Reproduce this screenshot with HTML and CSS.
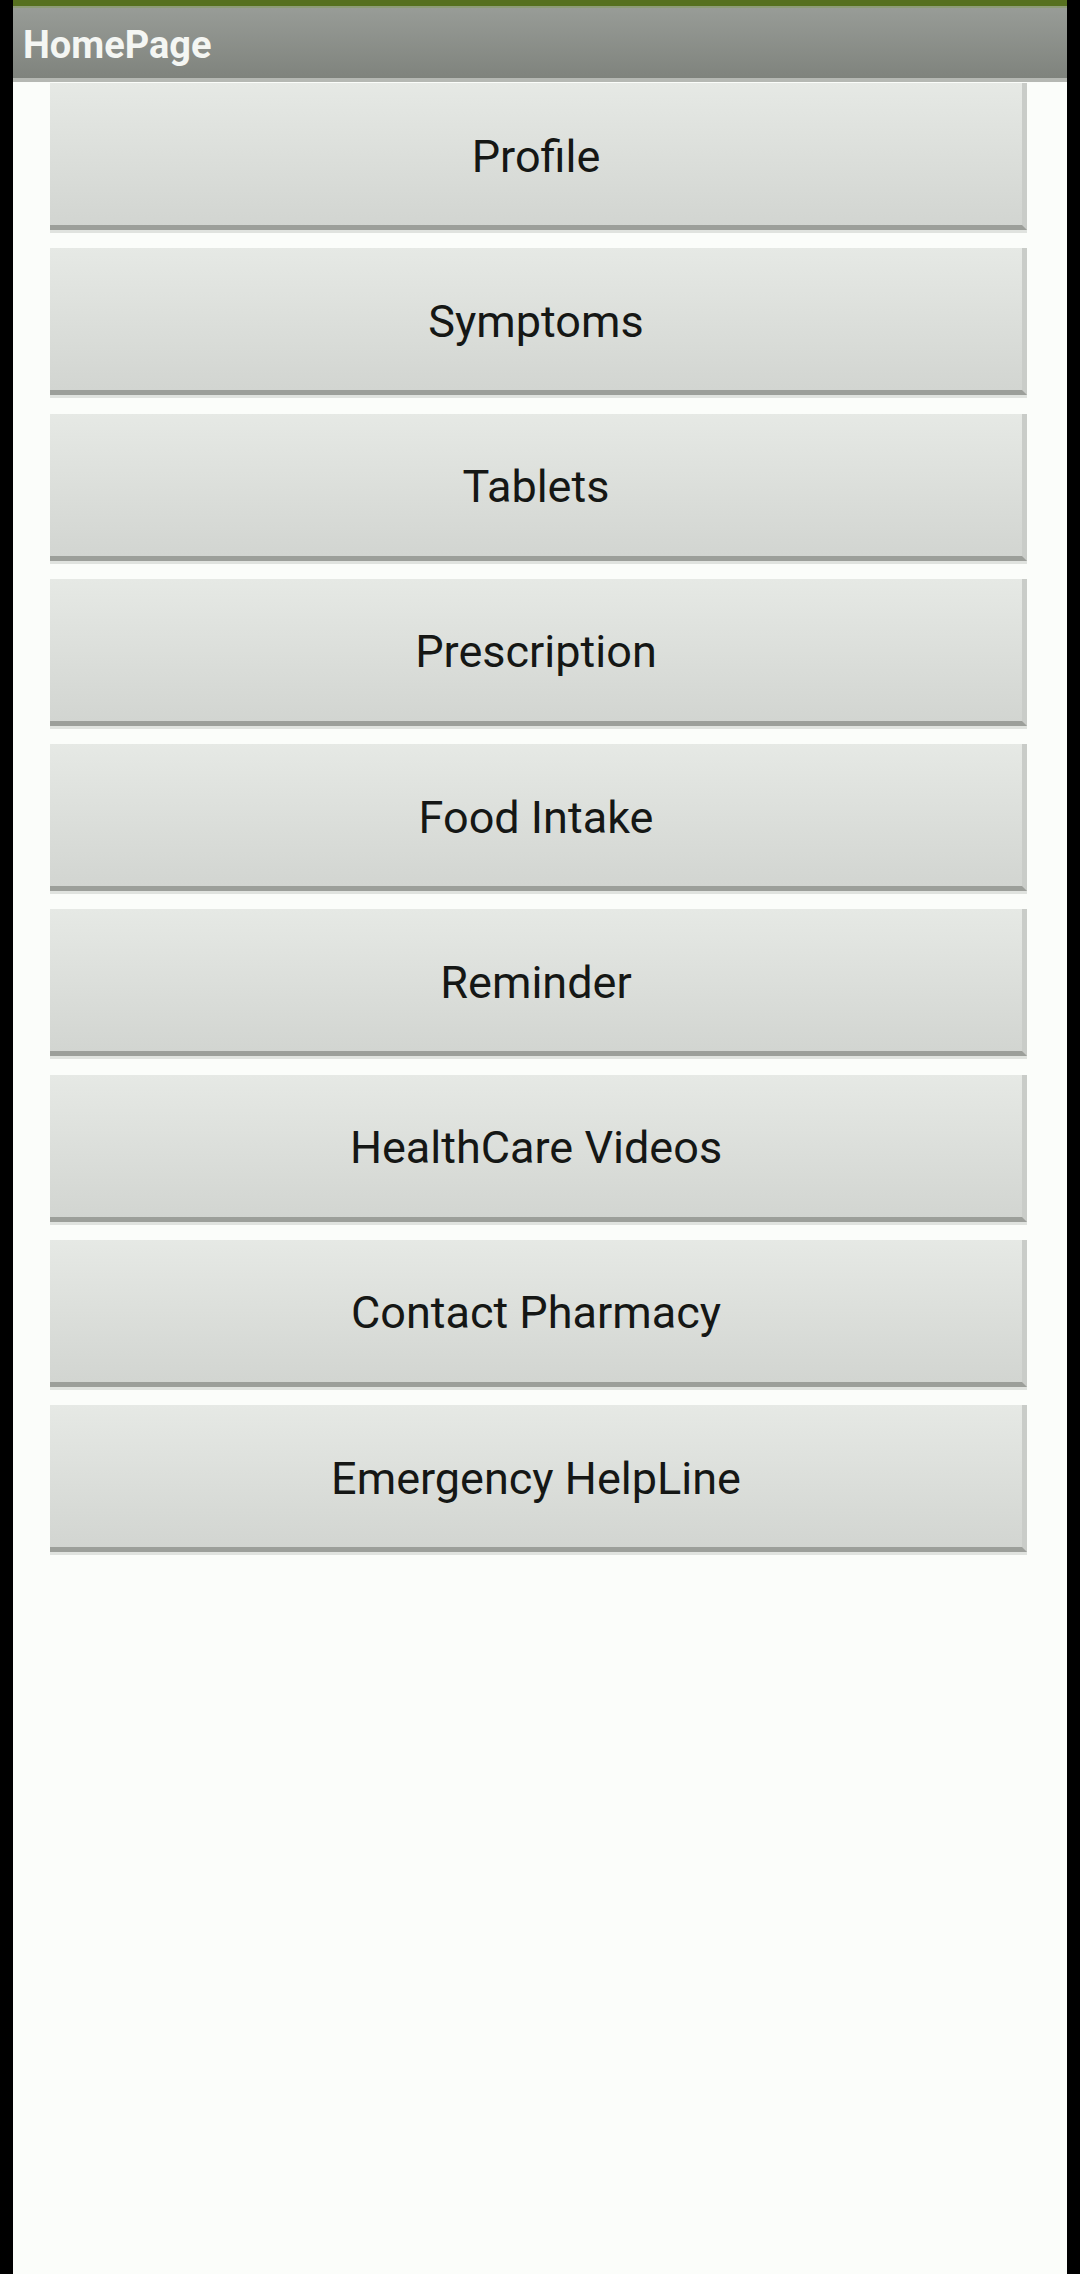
FILE: index.html
```html
<!DOCTYPE html>
<html>
<head>
<meta charset="utf-8">
<link rel="stylesheet" href="styles.css">
</head>
<body>
<div class="screen">
  <div class="statusbar"></div>
  <div class="titlebar">HomePage</div>
  <div class="list">
    <div class="btn">Profile</div>
    <div class="btn">Symptoms</div>
    <div class="btn">Tablets</div>
    <div class="btn">Prescription</div>
    <div class="btn">Food Intake</div>
    <div class="btn">Reminder</div>
    <div class="btn">HealthCare Videos</div>
    <div class="btn">Contact Pharmacy</div>
    <div class="btn">Emergency HelpLine</div>
  </div>
</div>
</body>
</html>
```
FILE: styles.css
```css
html, body {
  margin: 0;
  padding: 0;
  background: #000;
  height: 2274px;
  overflow: hidden;
}
.screen {
  margin: 0 13px;
  height: 2274px;
  background: #fbfdfa;
  font-family: Roboto, "Liberation Sans", sans-serif;
}
.statusbar {
  height: 6px;
  background: #56701f;
  border-bottom: 2px solid #8e9c78;
}
.titlebar {
  height: 74px;
  box-sizing: border-box;
  padding-left: 10px;
  padding-top: 4px;
  display: flex;
  align-items: center;
  background: linear-gradient(#989c97, #7f837d);
  border-bottom: 4px solid #b5b8b3;
  color: #f4f6f3;
  font-size: 38px;
  font-weight: 700;
}
.list {
  display: flex;
  flex-direction: column;
  gap: 18.25px;
  padding: 1px 40px 0 37px;
}
.btn {
  height: 147px;
  box-sizing: border-box;
  display: flex;
  align-items: center;
  justify-content: center;
  background: linear-gradient(#e6e9e5, #d2d5d1);
  border-bottom: 5px solid #9c9f9a;
  border-right: 5px solid #c9ccc8;
  box-shadow: 0 3px 0 #e0e3df;
  color: #151715;
  font-size: 45px;
  padding-top: 4px;
}
```
